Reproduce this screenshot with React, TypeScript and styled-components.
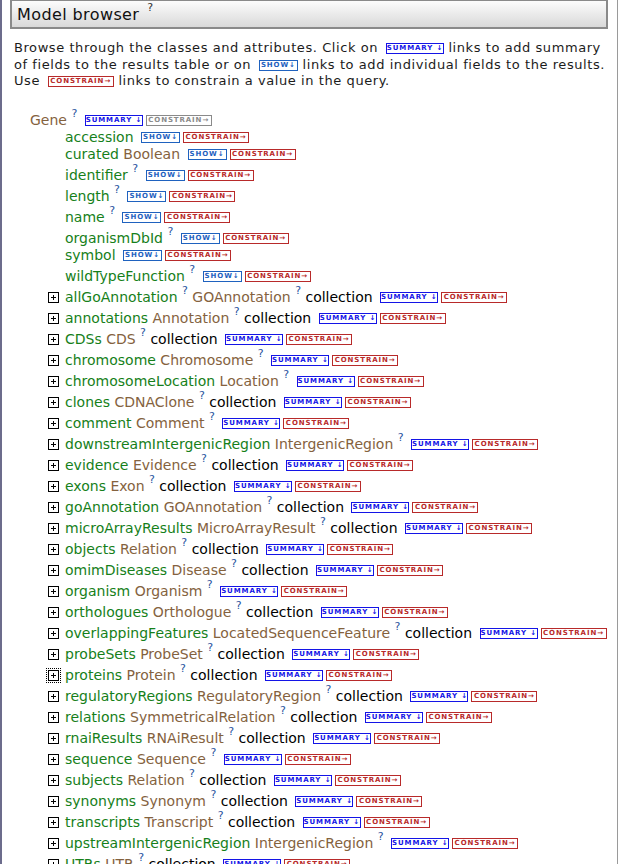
import React from "react";
import styled, { createGlobalStyle } from "styled-components";

const GlobalStyle = createGlobalStyle`
  html, body { margin: 0; padding: 0; background: #fff; }
  body { font-family: "DejaVu Sans", Verdana, sans-serif; color: #1c1c1c; }
`;

type Tone = "summary" | "show" | "constrain" | "off";

const toneColor: Record<Tone, string> = {
  summary: "#1414e6",
  show: "#1f62bf",
  constrain: "#b82a2a",
  off: "#8a8a8a",
};

const Page = styled.div`
  box-sizing: border-box;
  width: 618px;
  height: 864px;
  overflow: hidden;
  border-left: 2px solid #6c6c8c;
  border-right: 1px solid #9a9a9a;
`;

const Header = styled.div`
  box-sizing: border-box;
  height: 29px;
  margin: 0 9px 0 8px;
  border: 2px solid #8a8a8a;
  border-top-width: 1px;
  background: linear-gradient(#fcfcfc, #d9d9d9);
  padding: 4px 0 0 5px;
  font-size: 16px;
  line-height: 20px;
  letter-spacing: 0.4px;
  color: #111;
`;

const Intro = styled.p`
  margin: 11px 3px 0 12px;
  font-size: 13px;
  line-height: 16.5px;
  letter-spacing: 0.57px;
`;

const Help = styled.sup`
  font-size: 11px;
  line-height: 0;
  vertical-align: 0;
  position: relative;
  top: -8px;
  letter-spacing: 0;
  color: #2a55a0;
`;

const HeaderHelp = styled(Help)`
  top: -9px;
  margin-left: 8px;
  color: #333;
`;

const Badge = styled.span<{ $tone: Tone; $w: number }>`
  display: inline-block;
  box-sizing: border-box;
  width: ${(p) => p.$w}px;
  height: 11px;
  margin-left: 3px;
  vertical-align: middle;
  border: 1px solid ${(p) => toneColor[p.$tone]};
  color: ${(p) => toneColor[p.$tone]};
  font: bold 7px/9px "DejaVu Sans", sans-serif;
  letter-spacing: 0.9px;
  text-align: center;
  white-space: pre;
  overflow: hidden;
`;

const Tree = styled.div`
  margin-top: 18px;
  padding-left: 28px;
  font-size: 14px;
`;

const Row = styled.div<{ $indent: number; $help: boolean }>`
  padding-left: ${(p) => p.$indent}px;
  padding-top: ${(p) => (p.$help ? 4 : 0)}px;
  line-height: 17px;
  white-space: nowrap;
`;

const Field = styled.span`
  color: #16801a;
`;

const TypeName = styled.span`
  color: #84623e;
`;

const Plain = styled.span`
  color: #000;
`;

const Toggle = styled.span<{ $focus?: boolean }>`
  display: inline-block;
  width: 11px;
  height: 11px;
  margin-right: 6px;
  vertical-align: -1px;
  outline: ${(p) => (p.$focus ? "1px dotted #000" : "none")};
  outline-offset: 1px;
  svg { display: block; }
`;

const Plus = ({ focus }: { focus?: boolean }) => (
  <Toggle $focus={focus}>
    <svg width="11" height="11" viewBox="0 0 11 11" shapeRendering="crispEdges">
      <rect x="0.5" y="0.5" width="10" height="10" fill="#fff" stroke="#000" />
      <line x1="3" y1="5.5" x2="8" y2="5.5" stroke="#000" />
      <line x1="5.5" y1="3" x2="5.5" y2="8" stroke="#000" />
    </svg>
  </Toggle>
);

const Summary = () => (
  <Badge $tone="summary" $w={58}>
    SUMMARY ↓
  </Badge>
);
const Show = () => (
  <Badge $tone="show" $w={39}>
    SHOW↓
  </Badge>
);
const Constrain = ({ tone = "constrain" as Tone }) => (
  <Badge $tone={tone} $w={66}>
    CONSTRAIN→
  </Badge>
);

const attributes: { name: string; type?: string; help: boolean }[] = [
  { name: "accession", help: false },
  { name: "curated", type: "Boolean", help: false },
  { name: "identifier", help: true },
  { name: "length", help: true },
  { name: "name", help: true },
  { name: "organismDbId", help: true },
  { name: "symbol", help: false },
  { name: "wildTypeFunction", help: true },
];

// [field, type, isCollection]
const refs: [string, string, boolean][] = [
  ["allGoAnnotation", "GOAnnotation", true],
  ["annotations", "Annotation", true],
  ["CDSs", "CDS", true],
  ["chromosome", "Chromosome", false],
  ["chromosomeLocation", "Location", false],
  ["clones", "CDNAClone", true],
  ["comment", "Comment", false],
  ["downstreamIntergenicRegion", "IntergenicRegion", false],
  ["evidence", "Evidence", true],
  ["exons", "Exon", true],
  ["goAnnotation", "GOAnnotation", true],
  ["microArrayResults", "MicroArrayResult", true],
  ["objects", "Relation", true],
  ["omimDiseases", "Disease", true],
  ["organism", "Organism", false],
  ["orthologues", "Orthologue", true],
  ["overlappingFeatures", "LocatedSequenceFeature", true],
  ["probeSets", "ProbeSet", true],
  ["proteins", "Protein", true],
  ["regulatoryRegions", "RegulatoryRegion", true],
  ["relations", "SymmetricalRelation", true],
  ["rnaiResults", "RNAiResult", true],
  ["sequence", "Sequence", false],
  ["subjects", "Relation", true],
  ["synonyms", "Synonym", true],
  ["transcripts", "Transcript", true],
  ["upstreamIntergenicRegion", "IntergenicRegion", false],
  ["UTRs", "UTR", true],
];

export default function App() {
  return (
    <>
      <GlobalStyle />
      <Page>
        <Header>
          Model browser<HeaderHelp>?</HeaderHelp>
        </Header>
        <Intro>
          Browse through the classes and attributes. Click on <Summary /> links to add summary
          of fields to the results table or on <Show /> links to add individual fields to the results.
          Use <Constrain /> links to constrain a value in the query.
        </Intro>
        <Tree>
          <Row $indent={0} $help>
            <TypeName>Gene</TypeName> <Help>?</Help> <Summary />
            <Constrain tone="off" />
          </Row>
          {attributes.map((a) => (
            <Row key={a.name} $indent={35} $help={a.help}>
              <Field>{a.name}</Field>
              {a.type && (
                <>
                  {" "}
                  <TypeName>{a.type}</TypeName>
                </>
              )}
              {a.help && (
                <>
                  {" "}
                  <Help>?</Help>
                </>
              )}{" "}
              <Show />
              <Constrain />
            </Row>
          ))}
          {refs.map(([field, type, many], i) => (
            <Row key={field} $indent={18} $help>
              <Plus focus={field === "proteins"} />
              <Field>{field}</Field>
              {i === 0 && (
                <>
                  {" "}
                  <Help>?</Help>
                </>
              )}{" "}
              <TypeName>{type}</TypeName> <Help>?</Help>
              {many && (
                <>
                  {" "}
                  <Plain>collection</Plain>
                </>
              )}{" "}
              <Summary />
              <Constrain />
            </Row>
          ))}
        </Tree>
      </Page>
    </>
  );
}
